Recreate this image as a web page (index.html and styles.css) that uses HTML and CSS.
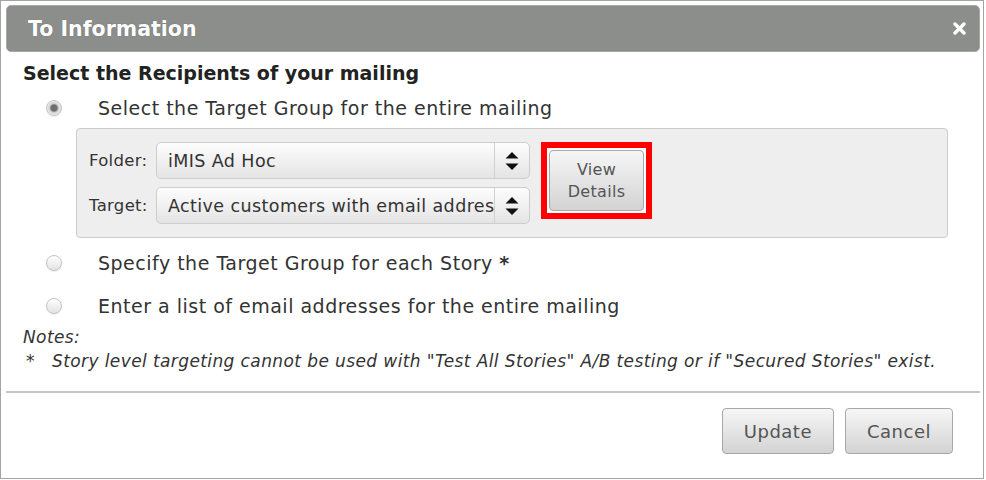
FILE: index.html
```html
<!DOCTYPE html>
<html lang="en">
<head>
  <meta charset="UTF-8" />
  <title>To Information</title>
  <link rel="stylesheet" href="styles.css">
</head>
<body>
  <div class="dialog">
    <div class="titlebar">
      <span class="title">To Information</span>
      <span class="close" aria-label="Close">
        <svg width="13" height="13" viewBox="0 0 13 13"><path d="M2 2 L11 11 M11 2 L2 11" stroke="#fff" stroke-width="3.4" stroke-linecap="round"/></svg>
      </span>
    </div>

    <div class="content">
      <h2>Select the Recipients of your mailing</h2>

      <label class="option">
        <input type="radio" name="mode" checked>
        <span>Select the Target Group for the entire mailing</span>
      </label>

      <div class="group">
        <div class="fields">
          <div class="field">
            <label>Folder:</label>
            <div class="select">
              <select><option>iMIS Ad Hoc</option></select>
              <span class="arrows"><svg width="14" height="20" viewBox="0 0 14 20"><path d="M7 1 L13.5 7.5 H0.5 Z M7 19 L13.5 12.5 H0.5 Z" fill="#111"/></svg></span>
            </div>
          </div>
          <div class="field">
            <label>Target:</label>
            <div class="select">
              <select><option>Active customers with email addresses</option></select>
              <span class="arrows"><svg width="14" height="20" viewBox="0 0 14 20"><path d="M7 1 L13.5 7.5 H0.5 Z M7 19 L13.5 12.5 H0.5 Z" fill="#111"/></svg></span>
            </div>
          </div>
        </div>
        <div class="highlight">
          <button class="btn details">View<br>Details</button>
        </div>
      </div>

      <label class="option">
        <input type="radio" name="mode">
        <span>Specify the Target Group for each Story <b class="star">*</b></span>
      </label>
      <label class="option">
        <input type="radio" name="mode">
        <span>Enter a list of email addresses for the entire mailing</span>
      </label>

      <div class="notes">
        <div>Notes:</div>
        <div class="note"><span class="mark">*</span>Story level targeting cannot be used with "Test All Stories" A/B testing or if "Secured Stories" exist.</div>
      </div>
    </div>

    <div class="footer">
      <button class="btn">Update</button>
      <button class="btn">Cancel</button>
    </div>
  </div>
</body>
</html>
```

FILE: styles.css
```css
body {
  margin: 0;
  font-family: "DejaVu Sans", Verdana, sans-serif;
  color: #333;
  background: #fff;
}
.dialog {
  box-sizing: border-box;
  width: 984px;
  height: 479px;
  border: 1px solid #a4a4a4;
  padding: 4px 3px 0 5px;
  display: flex;
  flex-direction: column;
}
.titlebar {
  height: 47px;
  box-sizing: border-box;
  background: #8c8e8c;
  border: 1px solid #a8a8a8;
  border-radius: 5px;
  display: flex;
  align-items: center;
  justify-content: space-between;
  padding: 0 13px 0 21px;
  color: #fff;
}
.title {
  font-size: 20.5px;
  font-weight: bold;
  text-shadow: 0 0 1px rgba(0,0,0,0.35);
}
.close {
  display: flex;
}
.content {
  padding: 0 12px 0 17px;
}
h2 {
  font-size: 19px;
  margin: 9px 0 8px;
  color: #222;
  line-height: 24px;
}
.option {
  display: flex;
  align-items: center;
  height: 30px;
  font-size: 19px;
  letter-spacing: 0.5px;
  padding-left: 23px;
}
.option + .option {
  margin-top: 13px;
}
.option input {
  appearance: none;
  width: 16px;
  height: 16px;
  margin: 0 36px 0 0;
  border-radius: 50%;
  border: 1px solid #c4c4c4;
  background: linear-gradient(#fff, #e2e2e2);
  box-shadow: 0 1px 1px rgba(0,0,0,0.08);
}
.option input:checked {
  background: radial-gradient(circle, #6e6e6e 0, #6e6e6e 3px, #cfcfcf 4.5px, #ececec 7px);
}
.star {
  font-weight: bold;
}
.group {
  margin: 5px 20px 10px 53px;
  box-sizing: border-box;
  height: 110px;
  background: #eee;
  border: 1px solid #ccc;
  border-radius: 4px;
  display: flex;
  align-items: center;
  padding: 0 12px;
}
.fields {
  display: flex;
  flex-direction: column;
  gap: 8px;
}
.field {
  display: flex;
  align-items: center;
}
.field label {
  font-size: 16.5px;
  letter-spacing: 0.3px;
  width: 67px;
}
.select {
  box-sizing: border-box;
  width: 374px;
  height: 37px;
  border: 1px solid #cdcdcd;
  border-radius: 5px;
  background: linear-gradient(#fdfdfd, #e4e4e4);
  display: flex;
}
.select select {
  appearance: none;
  flex: 1;
  min-width: 0;
  border: 0;
  background: transparent;
  font-family: inherit;
  font-size: 17.5px;
  letter-spacing: 0.4px;
  color: #333;
  padding: 0 0 0 11px;
  outline: none;
}
.arrows {
  width: 34px;
  border-left: 1px solid #d0d0d0;
  display: flex;
  align-items: center;
  justify-content: center;
}
.highlight {
  margin: 0 0 5px 11px;
  border: 6px solid #f00;
  background: #fff;
  padding: 2px;
}
.btn {
  font-family: inherit;
  font-size: 18px;
  letter-spacing: 0.5px;
  color: #555;
  background: linear-gradient(#f6f6f6, #d3d3d3);
  border: 1px solid #a8a8a8;
  border-radius: 4px;
}
.details {
  display: block;
  width: 95px;
  height: 61px;
  font-size: 16px;
  letter-spacing: 0.3px;
  line-height: 22px;
}
.notes {
  font-style: italic;
  font-size: 17px;
  letter-spacing: 0.4px;
  margin-top: 4px;
  line-height: 24px;
}
.note {
  padding-left: 3px;
}
.mark {
  font-style: normal;
  display: inline-block;
  width: 26px;
}
.footer {
  margin-top: 18px;
  border-top: 2px solid #c6c6c6;
  display: flex;
  justify-content: flex-end;
  gap: 11px;
  padding: 15px 27px 0 0;
}
.footer .btn {
  height: 46px;
  padding: 0 21px;
}
```
